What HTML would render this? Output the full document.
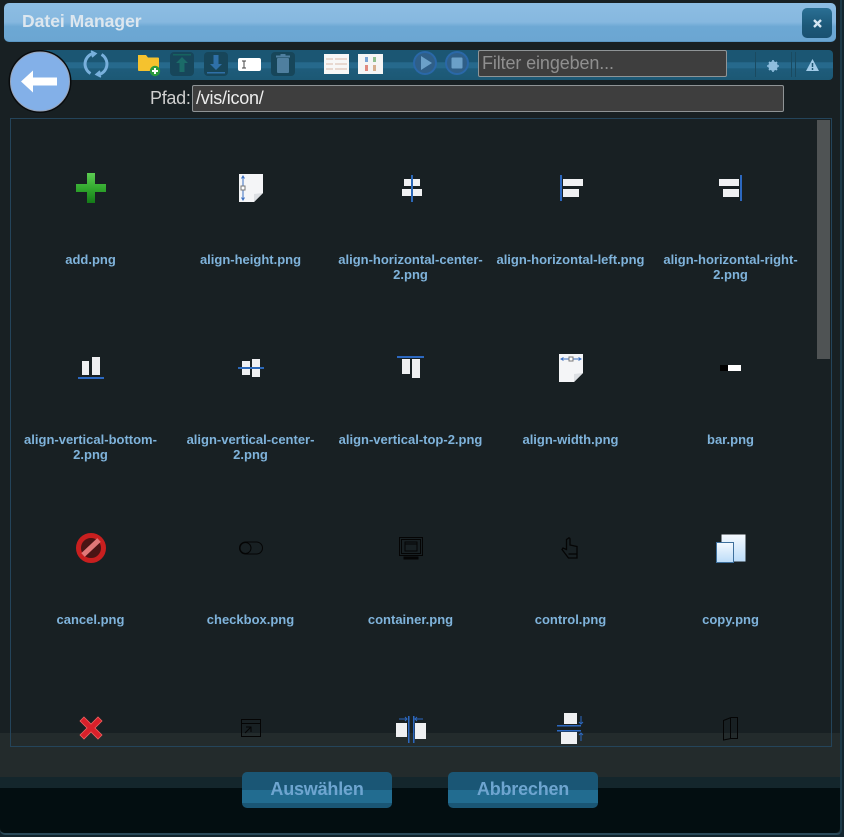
<!DOCTYPE html>
<html><head><meta charset="utf-8">
<style>
html,body{margin:0;padding:0;width:844px;height:837px;overflow:hidden;background:#13252e}
*{box-sizing:border-box}
body{font-family:"Liberation Sans",Arial,sans-serif;position:relative}
.a{position:absolute}
#dlg{left:0;top:0;width:842px;height:835px;background:#182023;border-radius:0 0 5px 5px;border-bottom:2px solid #2b4a5a;border-right:2px solid #1d3a48}
#title{left:4px;top:3px;width:832px;height:39px;border-radius:5px;background:linear-gradient(#8dbde3 0,#86b8df 50%,#6da8d4 62%,#6ba6d2 100%);border-bottom:1px solid #5b97c4}
#tt{left:22px;top:11px;font-size:17.5px;font-weight:bold;color:#dde7ef;white-space:nowrap;filter:blur(.3px)}
#x{left:802px;top:8px;width:30px;height:30px;border-radius:5px;background:linear-gradient(#2a6f94,#1c5878 60%,#1a5070);color:#cfe2f0;text-align:center}
#tb{left:40px;top:50px;width:793px;height:30px;border-radius:4px;background:linear-gradient(#1b5673 0,#1b5673 40%,#26698c 42%,#26698c 60%,#1e5c7b 62%,#1c5874 100%)}
.inp{background:#3e3e3e;border:1px solid #8f9496;border-radius:2px;font-size:18px;line-height:25px;padding-left:3px;white-space:nowrap;letter-spacing:-.12px}
#frame{left:10px;top:118px;width:822px;height:629px;border:1px solid #24445a}
#sb{left:817px;top:120px;width:13px;height:239px;background:#4f5354}
.lbl{position:absolute;width:150px;text-align:center;font-size:13px;font-weight:bold;line-height:15px;color:#7fb3db;transform:translateX(-.5px);filter:blur(.25px)}
.btn{position:absolute;top:772px;width:150px;height:36px;border-radius:5px;background:linear-gradient(#1a5675 0,#1a5675 50%,#226c90 50%,#226c90 86%,#1a5675 86%,#1a5675 100%);color:#6ea5d0;font-size:18px;font-weight:bold;text-align:center;line-height:35px;letter-spacing:-.2px}
.tbtn{position:absolute;top:52px;width:24px;height:24px;border-radius:4px;background:#1a4a60}
svg{position:absolute;overflow:visible;filter:blur(.35px)}
</style></head><body>
<div id="dlg" class="a"></div>
<div class="a" style="left:0;top:733px;width:840px;height:44px;background:#232b2c"></div>
<div class="a" style="left:0;top:777px;width:840px;height:11px;background:#14262c"></div>
<div class="a" style="left:0;top:788px;width:840px;height:45px;background:#030e11;border-radius:0 0 5px 5px"></div>

<div id="title" class="a"></div>
<div id="tt" class="a">Datei Manager</div>
<div id="x" class="a"></div>
<svg style="left:813px;top:19px" width="9" height="9" viewBox="0 0 9 9"><path d="M1 1L8 8M8 1L1 8" stroke="#d5e6f2" stroke-width="2.400"/></svg>

<div id="tb" class="a"></div>

<!-- refresh -->
<svg style="left:82px;top:50px" width="28" height="28" viewBox="0 0 28 28" fill="none" stroke="#78b0dc" stroke-width="3"><path d="M8.500 23.500A11 11 0 0 1 12 3.200"/><path d="M19.500 4.500A11 11 0 0 1 16 24.800"/><path d="M9 1L14 3.500L10 7" stroke-width="1.600" fill="#78b0dc"/><path d="M19 27L14 24.500L18 21" stroke-width="1.600" fill="#78b0dc"/></svg>
<!-- folder -->
<svg style="left:137px;top:53px" width="24" height="24" viewBox="0 0 24 24"><path d="M1 2h8l2 2.500h10a1 1 0 0 1 1 1V17a1 1 0 0 1-1 1H2a1 1 0 0 1-1-1z" fill="#f5c22e"/><circle cx="18" cy="18" r="5.200" fill="#2a9a3c"/><path d="M15 18h6M18 15v6" stroke="#fff" stroke-width="2"/></svg>
<!-- upload -->
<div class="tbtn" style="left:170px;background:#17465a"></div>
<svg style="left:170px;top:52px" width="24" height="24" viewBox="0 0 24 24"><rect x="3" y="2" width="18" height="1.500" fill="#16635f"/><path d="M12 5l-6 6h3.500v9h5v-9H18z" fill="#1b6b68"/></svg>
<!-- download -->
<div class="tbtn" style="left:204px;background:#17465a"></div>
<svg style="left:204px;top:52px" width="24" height="24" viewBox="0 0 24 24"><rect x="3" y="20" width="18" height="1.500" fill="#2f70a8"/><path d="M12 18l-6-6h3.500V3h5v9H18z" fill="#2f70a8"/></svg>
<!-- rename -->
<svg style="left:238px;top:58px" width="24" height="14" viewBox="0 0 24 14"><rect x="0" y="0" width="23" height="13" rx="2" fill="#fff"/><path d="M4 3h4M4 10h4M6 3v7" stroke="#444" stroke-width="1" fill="none"/></svg>
<!-- trash -->
<div class="tbtn" style="left:271px;background:#17465a"></div>
<svg style="left:271px;top:52px" width="24" height="24" viewBox="0 0 24 24"><rect x="6" y="6" width="12" height="15" rx="1" fill="#4f7f9f"/><rect x="5" y="3.500" width="14" height="2" fill="#4f7f9f"/><rect x="9.500" y="2" width="5" height="2" fill="#4f7f9f"/></svg>
<!-- list views -->
<svg style="left:324px;top:54px" width="26" height="21" viewBox="0 0 26 21"><rect width="25" height="20" fill="#f7f7f7"/><path d="M2 5h7M11 5h12M2 10h7M11 10h12M2 15h7M11 15h12" stroke="#d8b8a8" stroke-width="1"/></svg>
<svg style="left:358px;top:54px" width="26" height="21" viewBox="0 0 26 21"><rect width="25" height="20" fill="#f5f5f5"/><path d="M7 3h3v5H7z" fill="#7aa5d6"/><path d="M15 3h3v5h-3z" fill="#8fc08f"/><path d="M7 11h3v6H7z" fill="#e08a80"/><path d="M15 11h3v6h-3z" fill="#d6b090"/></svg>
<!-- play stop -->
<svg style="left:412px;top:50px" width="26" height="26" viewBox="0 0 26 26"><circle cx="13" cy="13" r="12" fill="#2a68a8"/><circle cx="13" cy="13" r="10" fill="#2f5f88"/><path d="M9 6l11 7-11 7z" fill="#6ba0c8"/></svg>
<svg style="left:444px;top:50px" width="26" height="26" viewBox="0 0 26 26"><circle cx="13" cy="13" r="12" fill="#2a68a8"/><circle cx="13" cy="13" r="10" fill="#2f5f88"/><rect x="7.500" y="7.500" width="11" height="11" rx="1" fill="#6ba0c8"/></svg>

<div class="a inp" style="left:478px;top:50px;width:249px;height:27px;color:#8f8f8f">Filter eingeben...</div>

<!-- right buttons -->
<div class="a" style="left:755px;top:52px;width:37px;height:25px;border-left:1px solid #1a4a60;border-right:1px solid #1a4a60"></div>
<div class="a" style="left:795px;top:52px;width:38px;height:25px;border-left:1px solid #1a4a60"></div>
<svg style="left:767px;top:60px" width="12" height="12" viewBox="0 0 12 12"><circle cx="6" cy="6" r="3.500" fill="none" stroke="#8fbede" stroke-width="2.600"/><path d="M6 0v12M0 6h12M2 2l8 8M10 2l-8 8" stroke="#8fbede" stroke-width="1.600"/></svg>
<svg style="left:806px;top:59px" width="13" height="12" viewBox="0 0 13 12"><path d="M6.500 0L13 12H0z" fill="#a0cbe8"/><path d="M6.500 4v4M6.500 9v2" stroke="#1c5673" stroke-width="1.500"/></svg>

<!-- back -->
<svg style="left:9px;top:50px" width="63" height="63" viewBox="0 0 63 63"><circle cx="31" cy="31.500" r="31.500" fill="#080b0d"/><circle cx="31" cy="31.500" r="29.500" fill="#83b0e8" stroke="#98a4b8" stroke-width="1"/><path d="M12 31.500L24 20.500v7h24v8H24v7z" fill="#fff"/></svg>

<div class="a" style="left:150px;top:87px;font-size:18px;line-height:22px;color:#cfcfcf;letter-spacing:-.3px">Pfad:</div>
<div class="a inp" style="left:192px;top:85px;width:592px;height:27px;color:#eee;letter-spacing:-.25px">/vis/icon/</div>

<div id="frame" class="a"></div>
<div id="sb" class="a"></div>

<!-- row 1 -->
<svg style="left:75px;top:172px" width="32" height="32" viewBox="0 0 32 32"><defs><linearGradient id="g1" x1="0" y1="0" x2="0" y2="1"><stop offset="0" stop-color="#5ccc52"/><stop offset=".55" stop-color="#2fa52c"/><stop offset="1" stop-color="#147a18"/></linearGradient></defs><path d="M12 1h8v11h11v8H20v11h-8V20H1v-8h11z" fill="url(#g1)"/></svg>
<svg style="left:239px;top:174px" width="25" height="29" viewBox="0 0 25 29"><path d="M0 0h24v19l-9 9H0z" fill="#f4f5f7"/><path d="M15 28v-8l9-1z" fill="#dcdfe3"/><path d="M4 2v24M2.500 4.500L4 2l1.500 2.500M2.500 23.500L4 26l1.500-2.500" stroke="#3a6fc0" fill="none"/><rect x="2" y="12" width="4" height="4" fill="#fff" stroke="#777"/></svg>
<svg style="left:402px;top:175px" width="20" height="27" viewBox="0 0 20 27"><rect x="2" y="4" width="16" height="7" fill="#f0f1f3"/><rect x="0" y="14" width="20" height="7" fill="#f0f1f3"/><rect x="9" y="0" width="2" height="27" fill="#2c68b8"/></svg>
<svg style="left:560px;top:175px" width="24" height="27" viewBox="0 0 24 27"><rect x="0" y="0" width="2" height="26" fill="#2c68c0"/><rect x="3" y="4" width="20" height="7" fill="#f0f1f3"/><rect x="3" y="14" width="16" height="8" fill="#f0f1f3"/></svg>
<svg style="left:718px;top:175px" width="24" height="27" viewBox="0 0 24 27"><rect x="22" y="0" width="2" height="26" fill="#2c68c0"/><rect x="1" y="4" width="20" height="7" fill="#f0f1f3"/><rect x="5" y="14" width="16" height="8" fill="#f0f1f3"/></svg>

<div class="lbl" style="left:16px;top:252px">add.png</div>
<div class="lbl" style="left:176px;top:252px">align-height.png</div>
<div class="lbl" style="left:336px;top:252px">align-horizontal-center-2.png</div>
<div class="lbl" style="left:496px;top:252px;white-space:nowrap">align-horizontal-left.png</div>
<div class="lbl" style="left:656px;top:252px">align-horizontal-right-2.png</div>

<!-- row 2 -->
<svg style="left:78px;top:356px" width="26" height="24" viewBox="0 0 26 24"><rect x="4" y="5" width="7" height="14" fill="#eff0f2"/><rect x="14" y="1" width="8" height="18" fill="#eff0f2"/><rect x="0" y="21" width="26" height="2" fill="#2c68c0"/></svg>
<svg style="left:238px;top:358px" width="26" height="20" viewBox="0 0 26 20"><rect x="4" y="3" width="8" height="14" fill="#eff0f2"/><rect x="14" y="1" width="8" height="18" fill="#eff0f2"/><rect x="0" y="9" width="26" height="2" fill="#2c68b8"/></svg>
<svg style="left:397px;top:355px" width="27" height="24" viewBox="0 0 27 24"><rect x="0" y="1" width="27" height="2" fill="#2c68c0"/><rect x="5" y="4" width="8" height="15" fill="#eff0f2"/><rect x="15" y="4" width="8" height="19" fill="#eff0f2"/></svg>
<svg style="left:559px;top:354px" width="25" height="29" viewBox="0 0 25 29"><path d="M0 0h24v19l-9 9H0z" fill="#f4f5f7"/><path d="M15 28v-8l9-1z" fill="#dcdfe3"/><path d="M2 5h20M4.500 3.500L2 5l2.500 1.500M19.500 3.500L22 5l-2.500 1.500" stroke="#3a6fc0" fill="none"/><rect x="10" y="3" width="4" height="4" fill="#fff" stroke="#777"/></svg>
<svg style="left:720px;top:365px" width="22" height="6" viewBox="0 0 22 6"><rect width="8" height="6" fill="#000"/><rect x="8" width="13" height="6" fill="#fff"/></svg>

<div class="lbl" style="left:16px;top:432px">align-vertical-bottom-2.png</div>
<div class="lbl" style="left:176px;top:432px">align-vertical-center-2.png</div>
<div class="lbl" style="left:336px;top:432px;white-space:nowrap">align-vertical-top-2.png</div>
<div class="lbl" style="left:496px;top:432px">align-width.png</div>
<div class="lbl" style="left:656px;top:432px">bar.png</div>

<!-- row 3 -->
<svg style="left:76px;top:533px" width="30" height="30" viewBox="0 0 30 30"><circle cx="15" cy="15" r="12.500" fill="#4a1414" stroke="#c81f1f" stroke-width="5"/><path d="M7 22L23 7" stroke="#e27878" stroke-width="5"/></svg>
<svg style="left:239px;top:541px" width="24" height="14" viewBox="0 0 24 14" fill="none" stroke="#050505" stroke-width="1"><rect x="0.500" y="1" width="23" height="12" rx="6"/><circle cx="6.500" cy="7" r="5.500"/></svg>
<svg style="left:399px;top:537px" width="24" height="23" viewBox="0 0 24 23" fill="none" stroke="#050505"><rect x="0.500" y="0.500" width="23" height="18"/><rect x="2.500" y="2.500" width="19" height="14"/><rect x="6" y="5" width="12" height="9"/><path d="M6 7h12"/><rect x="5" y="20" width="14" height="2" fill="#050505"/></svg>
<svg style="left:561px;top:537px" width="19" height="22" viewBox="0 0 19 22" fill="none" stroke="#050505" stroke-width="1.300"><path d="M7 1.500c1-1 2-.5 2 .5v6l7 1.500v11.500H7.500L1 12.500l1-1.500 3.500 1.500V2.500z"/><path d="M7.500 17h8.500"/></svg>
<svg style="left:716px;top:534px" width="31" height="29" viewBox="0 0 31 29"><defs><linearGradient id="c1" x1="0" y1="0" x2="0" y2="1"><stop offset="0" stop-color="#f4f9fe"/><stop offset="1" stop-color="#bcdcf8"/></linearGradient></defs><rect x="5.500" y=".5" width="24" height="27" fill="url(#c1)"/><rect x="0.500" y="8.500" width="17" height="20" fill="url(#c1)" stroke="#3d6f9c"/></svg>

<div class="lbl" style="left:16px;top:612px">cancel.png</div>
<div class="lbl" style="left:176px;top:612px">checkbox.png</div>
<div class="lbl" style="left:336px;top:612px">container.png</div>
<div class="lbl" style="left:496px;top:612px">control.png</div>
<div class="lbl" style="left:656px;top:612px">copy.png</div>

<!-- row 4 -->
<svg style="left:79px;top:716px" width="24" height="24" viewBox="0 0 24 24"><path d="M5 1L12 8 19 1 23 5 16 12 23 19 19 23 12 16 5 23 1 19 8 12 1 5z" fill="#d8202a" stroke="#ef6060" stroke-width=".8"/></svg>
<svg style="left:241px;top:719px" width="20" height="19" viewBox="0 0 20 19" fill="none" stroke="#050505"><rect x="0.500" y="0.500" width="19" height="17"/><path d="M0 4.500h20M4 14l6-6M5 8h5v5"/></svg>
<svg style="left:396px;top:715px" width="30" height="28" viewBox="0 0 30 28"><rect x="0" y="8" width="11" height="14" fill="#eff0f2"/><rect x="19" y="8" width="11" height="16" fill="#eff0f2"/><rect x="12" y="1" width="1.500" height="27" fill="#2c68c0"/><rect x="17" y="1" width="1.500" height="27" fill="#2c68c0"/><path d="M3 4h8M9 2l2 2-2 2M27 4h-8M21 2l-2 2 2 2" stroke="#2c68c0" fill="none"/></svg>
<svg style="left:557px;top:713px" width="27" height="31" viewBox="0 0 27 31"><rect x="7" y="0" width="13" height="11" fill="#eff0f2"/><rect x="4" y="19" width="16" height="12" fill="#eff0f2"/><rect x="0" y="12" width="24" height="1.500" fill="#2c68c0"/><rect x="0" y="17" width="24" height="1.500" fill="#2c68c0"/><path d="M24 3v8M22 9l2 2 2-2M24 28v-8M22 22l2-2 2 2" stroke="#2c68c0" fill="none"/></svg>
<svg style="left:723px;top:717px" width="15" height="24" viewBox="0 0 15 24" fill="none" stroke="#050505"><path d="M0.500 3.500L8 .5h6.500v21H8L0.500 23z"/><path d="M7.500 1v21"/></svg>

<div class="btn" style="left:242px">Auswählen</div>
<div class="btn" style="left:448px">Abbrechen</div>
</body></html>
